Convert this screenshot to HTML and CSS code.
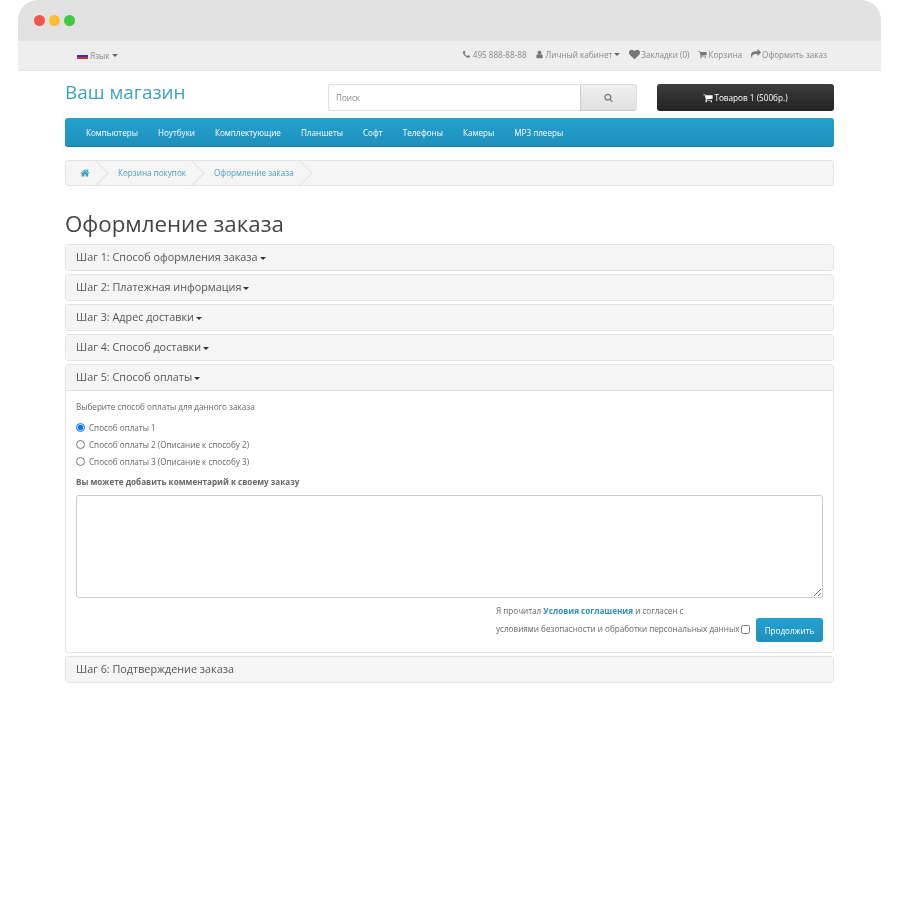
FILE: index.html
```html
<!DOCTYPE html>
<html lang="ru">
<head>
<meta charset="utf-8">
<title>Оформление заказа</title>
<link rel="stylesheet" href="styles.css">
</head>
<body>
<svg class="defs" width="0" height="0" aria-hidden="true">
  <symbol id="i-home" viewBox="0 0 1792 1792"><path d="M1472 992v480q0 26-19 45t-45 19h-384v-384h-256v384h-384q-26 0-45-19t-19-45v-480q0-1 .5-3t.5-3l575-474 575 474q1 2 1 6zm223-69l-62 74q-8 9-21 11h-3q-13 0-21-7l-692-577-692 577q-12 8-24 7-13-2-21-11l-62-74q-8-10-7-23.500t11-21.500l719-599q32-26 76-26t76 26l244 204v-195q0-14 9-23t23-9h192q14 0 23 9t9 23v408l219 182q10 8 11 21.500t-7 23.500z"/></symbol>
  <symbol id="i-search" viewBox="0 0 1792 1792"><path d="M1216 832q0-185-131.500-316.500t-316.500-131.500-316.500 131.500-131.500 316.500 131.500 316.500 316.500 131.500 316.500-131.500 131.500-316.500zm512 832q0 52-38 90t-90 38q-54 0-90-38l-343-342q-179 124-399 124-143 0-273.500-55.500t-225-150-150-225-55.500-273.500 55.500-273.500 150-225 225-150 273.500-55.500 273.500 55.500 225 150 150 225 55.500 273.500q0 220-124 399l343 343q37 37 37 90z"/></symbol>
  <symbol id="i-heart" viewBox="0 0 1792 1792"><path d="M896 1664q-26 0-44-18l-624-602q-10-8-27.500-26t-55.500-65.500-68-97.500-53.500-121-23.500-138q0-220 127-344t351-124q62 0 126.500 21.500t120 58 95.500 68.500 76 68q36-36 76-68t95.500-68.500 120-58 126.500-21.500q224 0 351 124t127 344q0 221-229 450l-623 600q-18 18-44 18z"/></symbol>
  <symbol id="i-user" viewBox="0 0 1792 1792"><path d="M1536 1399q0 109-62.500 187t-150.500 78h-854q-88 0-150.500-78t-62.500-187q0-85 8.500-160.500t31.500-152 58.500-131 94-89 134.500-34.500q131 128 313 128t313-128q76 0 134.500 34.500t94 89 58.500 131 31.500 152 8.500 160.500zm-256-887q0 159-112.500 271.500t-271.500 112.500-271.500-112.500-112.500-271.500 112.500-271.500 271.500-112.500 271.500 112.500 112.500 271.500z"/></symbol>
  <symbol id="i-cart" viewBox="0 0 1792 1792"><path d="M704 1536q0 52-38 90t-90 38-90-38-38-90 38-90 90-38 90 38 38 90zm896 0q0 52-38 90t-90 38-90-38-38-90 38-90 90-38 90 38 38 90zm128-1088v512q0 24-16.500 42.500t-40.500 21.500l-1044 122q13 60 13 70 0 16-24 64h920q26 0 45 19t19 45-19 45-45 19h-1024q-26 0-45-19t-19-45q0-11 8-31.500t16-36 21.500-40 15.500-29.500l-177-823h-204q-26 0-45-19t-19-45 19-45 45-19h256q16 0 28.500 6.500t19.500 15.500 13 24.500 8 26 5.500 29.500 4.500 26h1201q26 0 45 19t19 45z"/></symbol>
  <symbol id="i-phone" viewBox="0 0 1792 1792"><path d="M1600 1240q0 27-10 70.500t-21 68.500q-21 50-122 106-94 51-186 51-27 0-53-3.500t-57.500-12.500-47-14.500-55.500-20.500-49-18q-98-35-175-83-127-79-264-216t-216-264q-48-77-83-175-3-9-18-49t-20.500-55.500-14.500-47-12.500-57.500-3.500-53q0-92 51-186 56-101 106-122 25-11 68.500-21t70.500-10q14 0 21 3 18 6 53 76 11 19 30 54t35 63.500 31 53.500q3 4 17.500 25t21.500 35.500 7 28.500q0 20-28.500 50t-62 55-62 53-28.500 46q0 9 5 22.500t8.500 20.500 14 24 11.500 19q76 137 174 235t235 174q2 1 19 11.500t24 14 20.500 8.500 22.500 5q18 0 46-28.500t53-62 55-62 50-28.500q14 0 28.500 7t35.500 21.500 25 17.500q25 15 53.500 31t63.500 35 54 30q70 35 76 53 3 7 3 21z"/></symbol>
  <symbol id="i-share" viewBox="0 0 1792 1792"><path d="M1792 640q0 26-19 45l-512 512q-19 19-45 19t-45-19-19-45v-256h-224q-98 0-175.500 6t-154 21.500-133 42.500-105.500 69.500-80 101-48.500 138.500-17.500 181q0 55 5 123 0 6 2.500 23.500t2.500 26.500q0 15-8.500 25t-23.500 10q-16 0-28-17-7-9-13-22t-13.500-30-10.500-24q-127-285-127-451 0-199 53-333 162-403 875-403h224v-256q0-26 19-45t45-19 45 19l512 512q19 19 19 45z"/></symbol>
</svg>
<div class="window">
  <div class="titlebar">
    <span class="dot dot-red"></span><span class="dot dot-yellow"></span><span class="dot dot-green"></span>
  </div>
  <div class="topbar">
    <div class="lang">
      <svg class="flag" viewBox="0 0 3 3" preserveAspectRatio="none"><rect width="3" height="1" fill="#e9e9ef"/><rect y="1" width="3" height="1" fill="#2b3f9c"/><rect y="2" width="3" height="1" fill="#d52b3a"/></svg>
      <span>Язык</span><span class="caret caret-grey"></span>
    </div>
    <div class="toplinks">
      <span class="toplink"><svg class="ico"><use href="#i-phone"/></svg>495 888-88-88</span>
      <span class="toplink"><svg class="ico"><use href="#i-user"/></svg>Личный кабинет<span class="caret caret-grey"></span></span>
      <span class="toplink"><svg class="ico ico-heart"><use href="#i-heart"/></svg>Закладки (0)</span>
      <span class="toplink"><svg class="ico"><use href="#i-cart"/></svg>Корзина</span>
      <span class="toplink"><svg class="ico ico-share"><use href="#i-share"/></svg>Оформить заказ</span>
    </div>
  </div>
  <div class="page">
    <header class="header">
      <div class="logo">Ваш магазин</div>
      <div class="search">
        <div class="search-input">Поиск</div>
        <div class="search-btn"><svg class="ico-search"><use href="#i-search"/></svg></div>
      </div>
      <div class="cart-btn"><svg class="ico-cart"><use href="#i-cart"/></svg>Товаров 1 (500бр.)</div>
    </header>
    <nav class="menu">
      <span>Компьютеры</span><span>Ноутбуки</span><span>Комплектующие</span><span>Планшеты</span><span>Софт</span><span>Телефоны</span><span>Камеры</span><span>MP3 плееры</span>
    </nav>
    <div class="crumbs">
      <span class="crumb crumb-home"><svg class="ico-home"><use href="#i-home"/></svg></span>
      <span class="crumb">Корзина покупок</span>
      <span class="crumb">Оформление заказа</span>
    </div>
    <h1 class="title">Оформление заказа</h1>
    <div class="panels">
      <div class="panel"><div class="panel-head">Шаг 1: Способ оформления заказа<span class="caret caret-dark"></span></div></div>
      <div class="panel"><div class="panel-head">Шаг 2: Платежная информация<span class="caret caret-dark"></span></div></div>
      <div class="panel"><div class="panel-head">Шаг 3: Адрес доставки<span class="caret caret-dark"></span></div></div>
      <div class="panel"><div class="panel-head">Шаг 4: Способ доставки<span class="caret caret-dark"></span></div></div>
      <div class="panel">
        <div class="panel-head panel-head-open">Шаг 5: Способ оплаты<span class="caret caret-dark"></span></div>
        <div class="panel-body">
          <p class="hint">Выберите способ оплаты для данного заказа</p>
          <label class="radio"><input type="radio" name="pay" checked>Способ оплаты 1</label>
          <label class="radio"><input type="radio" name="pay">Способ оплаты 2 (Описание к способу 2)</label>
          <label class="radio"><input type="radio" name="pay">Способ оплаты 3 (Описание к способу 3)</label>
          <p class="comment-label">Вы можете добавить комментарий к своему заказу</p>
          <textarea class="comment"></textarea>
          <div class="agree">
            <div class="agree-text">
              <div class="agree-line">Я прочитал <b class="agree-link">Условия соглашения</b> и согласен с</div>
              <div class="agree-line agree-check">условиями безопасности и обработки персональных данных<input type="checkbox"></div>
            </div>
            <div class="continue">Продолжить</div>
          </div>
        </div>
      </div>
      <div class="panel"><div class="panel-head">Шаг 6: Подтверждение заказа</div></div>
    </div>
  </div>
</div>
</body>
</html>
```
FILE: styles.css
```css
* { box-sizing: border-box; }
html, body { margin: 0; padding: 0; background: #fff; }
body { font-family: "Open Sans", sans-serif; color: #666; font-size: 8.15px; min-height: 900px; }
.defs { display: block; height: 0; }
.window { margin-left: 18px; width: 863px; }
.titlebar { height: 41px; background: #e2e2e2; border-radius: 20px 20px 0 0; display: flex; align-items: center; gap: 4px; padding-left: 16px; }
.dot { width: 11px; height: 11px; border-radius: 50%; }
.dot-red { background: #f5544d; }
.dot-yellow { background: #fbbc2f; }
.dot-green { background: #3fc93f; }
.topbar { height: 30px; background: #eee; border-bottom: 1px solid #e4e4e4; display: flex; justify-content: space-between; align-items: center; padding: 0 54px 3px 59px; color: #888; filter: blur(.3px); }
.lang { display: flex; align-items: center; padding-top: 2px; }
.flag { width: 11px; height: 6px; margin-right: 2px; margin-top: 1px; }
.toplinks { display: flex; gap: 8.5px; }
.toplink { display: flex; align-items: center; }
.ico { width: 9px; height: 9px; fill: #777; margin-right: 1.5px; }
.ico-heart { width: 11px; height: 11px; }
.ico-share { width: 10px; height: 10px; }
.caret { display: inline-block; width: 0; height: 0; border-left: 3px solid transparent; border-right: 3px solid transparent; border-top: 3px solid #666; margin-left: 2px; vertical-align: middle; }
.caret-dark { border-top-color: #333; border-left-width: 3.3px; border-right-width: 3.3px; border-top-width: 3.6px; margin-left: 2px; }
.page { padding: 0 47px; filter: blur(.3px); }
.header { display: flex; align-items: flex-start; height: 47px; padding-top: 13px; }
.logo { width: 263px; font-size: 18.9px; line-height: 16px; color: #3f9fc4; height: 16px; }
.search { display: flex; width: 309px; height: 27px; }
.search-input { flex: 1; border: 1px solid #e0e0e0; border-right: 0; border-radius: 3px 0 0 3px; background: #fff; padding-left: 7px; line-height: 25px; color: #888; }
.search-btn { width: 57px; background: linear-gradient(#f0f0f0, #e0e0e0); border: 1px solid #e0e0e0; border-left-color: #ccc; border-bottom-color: #ccc; border-radius: 0 3px 3px 0; display: flex; align-items: center; justify-content: center; }
.ico-search { width: 9px; height: 9px; fill: #777; }
.cart-btn { margin-left: 20px; width: 177px; height: 27px; border-radius: 3px; background: linear-gradient(#3d3d3d, #222); color: #fff; display: flex; align-items: center; justify-content: center; font-size: 8.2px; }
.ico-cart { width: 10px; height: 10px; fill: #fff; margin-right: 1px; }
.menu { height: 29px; border-radius: 3px; background: linear-gradient(#23a1d1, #1f90bb); border-bottom: 1px solid #187a9f; display: flex; align-items: center; gap: 20px; padding-left: 21px; color: #fff; }
.crumbs { margin-top: 13px; height: 26px; border: 1px solid #e4e4e4; border-radius: 3px; background: #f5f5f5; display: flex; align-items: center; color: #4a9fc0; overflow: hidden; }
.crumb { position: relative; height: 100%; display: flex; align-items: center; padding: 0 19px 1px 9px; }
.crumb::after { content: ""; position: absolute; right: 4px; top: 3px; width: 17px; height: 17px; border-top: 1px solid #e2e2e2; border-right: 1px solid #e2e2e2; transform: rotate(45deg); }
.crumb-home { padding: 0 19px 1px 14px; }
.ico-home { width: 10px; height: 10px; fill: #3d9fc4; }
.title { margin: 23px 0 5px; font-size: 22.3px; line-height: 30px; font-weight: 400; color: #444; }
.panels { display: flex; flex-direction: column; gap: 3px; }
.panel { border: 1px solid #e4e4e4; border-radius: 3px; background: #fff; }
.panel-head { height: 25px; background: #f5f5f5; padding-left: 10px; font-size: 10.82px; line-height: 24px; color: #555; }
.panel-head-open { border-bottom: 1px solid #e4e4e4; height: 26px; }
.panel-body { padding: 9px 10px 0; height: 261px; }
.hint { margin: 0 0 5px; line-height: 14px; }
.radio { display: flex; align-items: center; height: 17px; }
.radio input { margin: 0 4px 0 0; width: 9px; height: 9px; }
.comment-label { margin: 5px 0 6px; font-weight: 700; line-height: 14px; }
.comment { display: block; width: 100%; height: 103px; border: 1px solid #ccc; border-radius: 3px; margin: 0; }
.agree { display: flex; justify-content: flex-end; align-items: flex-start; margin-top: 4px; }
.agree-text { width: 260px; }
.agree-line { height: 18px; line-height: 18px; }
.agree-link { color: #2f8fb4; }
.agree-check { display: flex; align-items: center; white-space: nowrap; }
.agree-check input { margin: 0 0 0 2px; width: 9px; height: 9px; }
.continue { width: 67px; height: 24px; margin-top: 16px; border-radius: 3px; background: linear-gradient(#23a1d1, #1f90bb); color: #fff; line-height: 25px; text-align: center; }
```
